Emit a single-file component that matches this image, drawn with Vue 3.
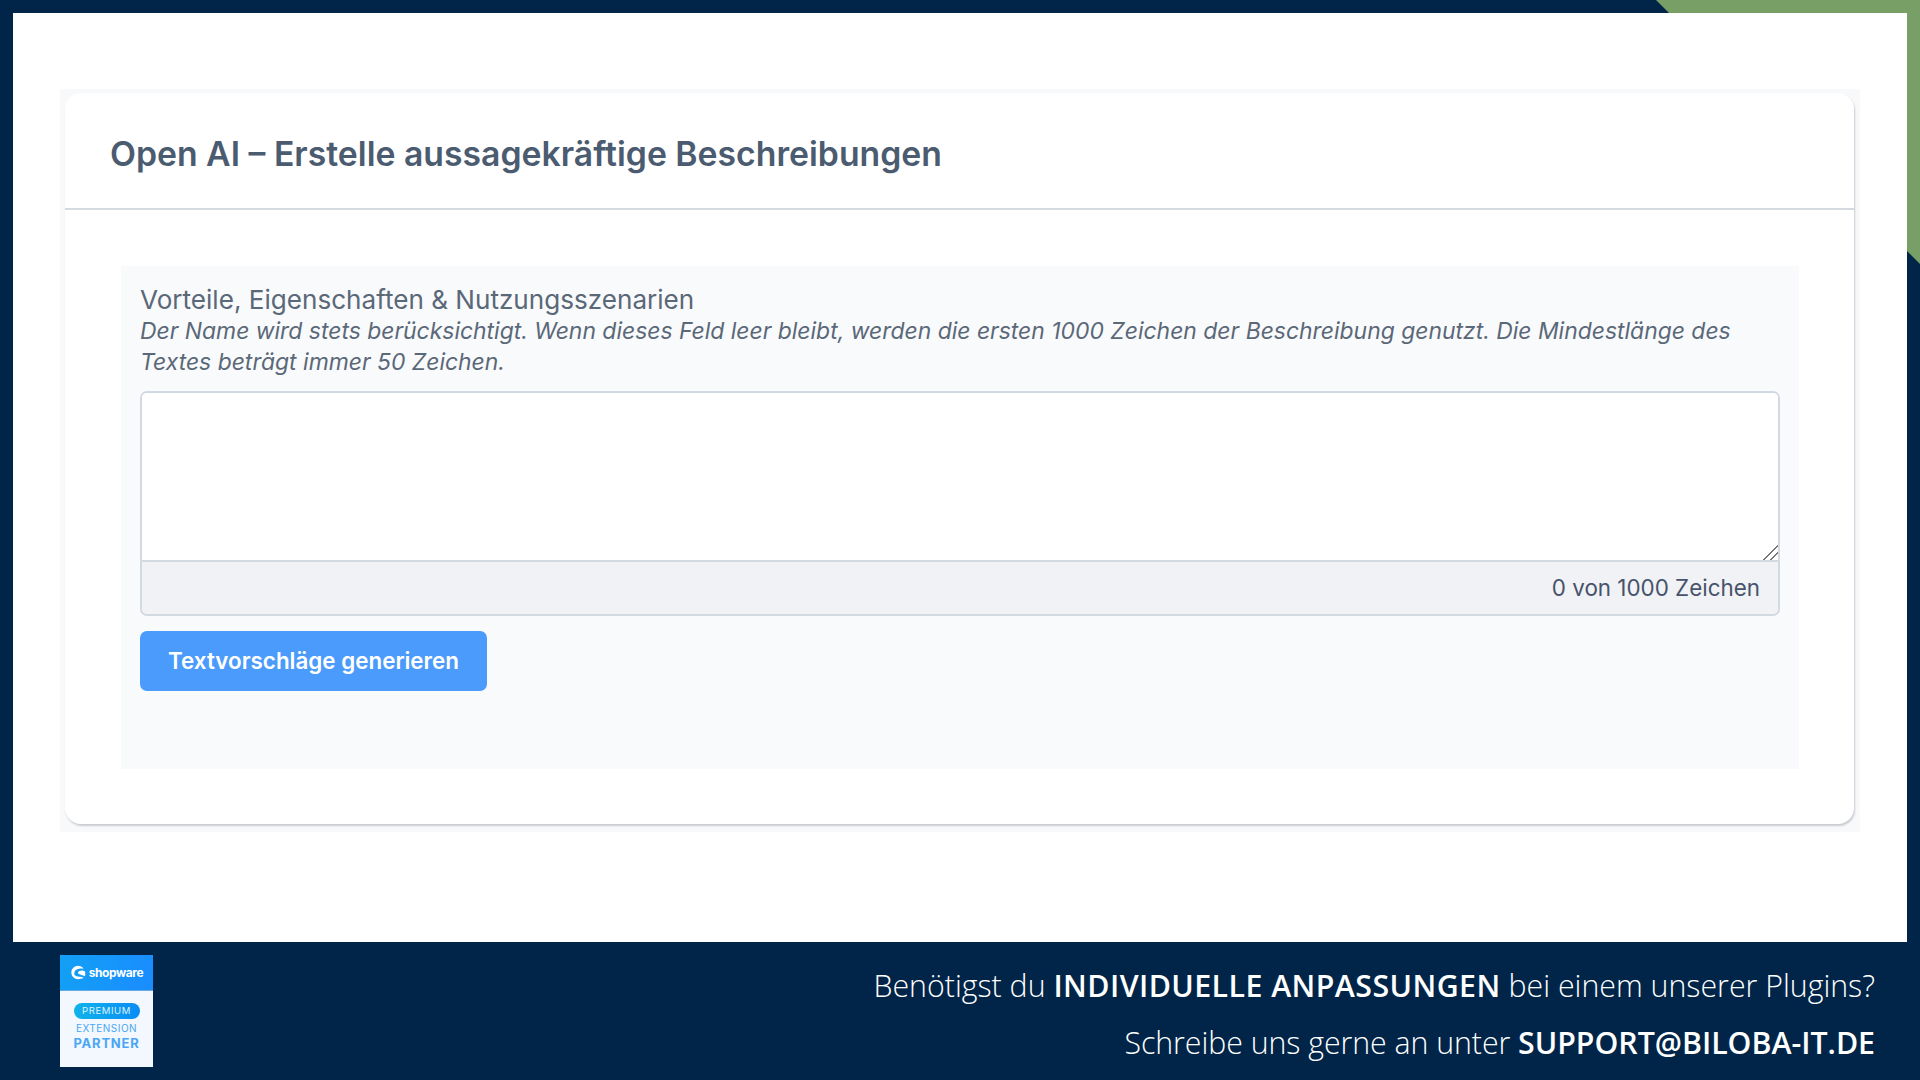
<template>
  <div class="slide">
    <div class="corner"></div>

    <main class="sheet">
      <div class="frame">
        <section class="card">
          <header class="card-header">
            <h1>Open AI – Erstelle aussagekräftige Beschreibungen</h1>
          </header>
          <div class="card-body">
            <div class="form-box">
              <label class="field-label" for="usp">Vorteile, Eigenschaften &amp; Nutzungsszenarien</label>
              <p class="field-help">
                Der Name wird stets berücksichtigt. Wenn dieses Feld leer bleibt, werden die ersten 1000 Zeichen der
                Beschreibung genutzt. Die Mindestlänge des Textes beträgt immer 50 Zeichen.
              </p>
              <div class="input-group">
                <textarea id="usp" class="input"></textarea>
                <div class="counter">0 von 1000 Zeichen</div>
              </div>
              <button class="generate" type="button">Textvorschläge generieren</button>
            </div>
          </div>
        </section>
      </div>
    </main>

    <footer class="footer">
      <div class="badge">
        <div class="badge-top">
          <svg class="sw-mark" viewBox="0 0 20 20" aria-hidden="true">
            <path d="M15.8 16.2C13.6 14.9 9.6 15.4 7 14.2 4.8 13.2 4.4 10.4 5.7 8.4 7.3 6 11.4 4.7 15.6 5.6 15.9 5.6 16 5.2 15.7 5 14.2 3.3 12 2.2 9.7 2.2 5.1 2.2 1.6 5.7 1.6 10.1c0 4.4 3.6 7.9 8 7.9 2.2 0 4.3-.7 6.2-1.4.2-.1.2-.3 0-.4Z" />
            <path d="M17.8 8.8c-.1-.1-2.7-1.1-4.900-1-1.900 0-3.400 1-3.400 2.400 0 1.200 1.300 1.800 3.200 2.300 1.800.5 3.600 1 5 1.900.2-.8.4-2.700.1-5.600Z" />
          </svg>
          <span class="sw-name">shopware</span>
        </div>
        <div class="badge-bottom">
          <span class="pill">PREMIUM</span>
          <span class="ext">EXTENSION</span>
          <span class="partner">PARTNER</span>
        </div>
      </div>

      <div class="contact">
        <p>Benötigst du <strong>INDIVIDUELLE ANPASSUNGEN</strong> bei einem unserer Plugins?</p>
        <p>Schreibe uns gerne an unter <strong>SUPPORT@BILOBA-IT.DE</strong></p>
      </div>
    </footer>
  </div>
</template>

<script setup>
</script>

<style>
html,
body {
  margin: 0;
  background: #002548;
}
</style>

<style scoped>
* {
  box-sizing: border-box;
}

.slide {
  position: relative;
  width: 1920px;
  height: 1080px;
  overflow: hidden;
  display: flex;
  flex-direction: column;
  padding: 13px 13px 0;
  background: #002548;
  font-family: Inter, "Liberation Sans", sans-serif;
}

/* green triangle top right, sits behind the white sheet */
.corner {
  position: absolute;
  top: 0;
  right: 0;
  width: 264px;
  height: 264px;
  background: #789f65;
  clip-path: polygon(0 0, 100% 0, 100% 100%);
}

.sheet {
  position: relative;
  height: 929px;
  flex: none;
  padding: 76px 47px 0;
  background: #fff;
}

.frame {
  height: 743px;
  padding: 4px 6px 8px 5px;
  background: #f8f9fb;
}

.card {
  height: 100%;
  background: #fff;
  border-radius: 16px;
  box-shadow: 1px 2px 2px rgba(90, 100, 115, 0.3);
}

.card-header {
  height: 117px;
  padding: 6px 45px 0;
  display: flex;
  align-items: center;
  border-bottom: 2px solid #d5dae1;
}

.card-header h1 {
  margin: 0;
  font-size: 33.75px;
  font-weight: 600;
  color: #4b5b70;
}

.card-body {
  padding: 56px 55px 0 56px;
}

.form-box {
  height: 503px;
  padding: 19px 19px 0;
  background: #f9fafc;
}

.field-label {
  display: block;
  margin-bottom: 1px;
  font-size: 26.1px;
  line-height: 30px;
  color: #5a6878;
}

.field-help {
  margin: 0 0 13px;
  font-size: 22.92px;
  line-height: 31px;
  font-style: italic;
  color: #5a6878;
}

.input-group {
  border: 2px solid #d3d9e1;
  border-radius: 7px;
  overflow: hidden;
}

.input {
  display: block;
  width: 100%;
  height: 167px;
  margin: 0;
  padding: 10px;
  border: 0;
  outline: 0;
  background: #fff;
  resize: vertical;
}

.input::-webkit-resizer {
  background: linear-gradient(
    135deg,
    transparent 49%,
    #777 49%,
    #777 54%,
    transparent 54%,
    transparent 72%,
    #777 72%,
    #777 77%,
    transparent 77%
  );
}

.counter {
  height: 54px;
  padding: 0 18px 2px;
  display: flex;
  align-items: center;
  justify-content: flex-end;
  border-top: 2px solid #d3d9e1;
  background: #f0f2f5;
  font-size: 22.4px;
  color: #47536a;
}

.generate {
  display: block;
  width: 347px;
  height: 60px;
  margin-top: 15px;
  padding: 0 0 2px;
  border: 0;
  border-radius: 7px;
  background: #4a9bfb;
  color: #fff;
  font-family: inherit;
  font-size: 22.4px;
  font-weight: 600;
}

.footer {
  flex: 1;
  display: flex;
  justify-content: space-between;
  padding: 13px 32px 0 47px;
  color: #fff;
}

.badge {
  width: 93px;
  height: 112px;
  display: flex;
  flex-direction: column;
  background: #f2f8fe;
}

.badge-top {
  height: 36px;
  display: flex;
  align-items: center;
  justify-content: center;
  gap: 2px;
  background: linear-gradient(100deg, #12a0f5, #1a8cff);
  border-bottom: 1px solid #6aa9df;
}

.sw-mark {
  width: 17px;
  height: 17px;
  fill: #fff;
}

.sw-name {
  font-size: 12px;
  font-weight: 700;
  letter-spacing: -0.4px;
  color: #fff;
}

.badge-bottom {
  flex: 1;
  display: flex;
  flex-direction: column;
  align-items: center;
  padding-top: 12px;
  color: #4ba6f5;
}

.pill {
  width: 66px;
  height: 16px;
  border-radius: 8px;
  background: linear-gradient(90deg, #10b3ea, #0a8cf5);
  color: #dff3ff;
  font-size: 9.5px;
  line-height: 16px;
  letter-spacing: 0.6px;
  text-align: center;
}

.ext {
  margin-top: 4px;
  font-size: 10px;
  line-height: 11px;
  letter-spacing: 0.5px;
}

.partner {
  margin-top: 1px;
  font-size: 13px;
  line-height: 16px;
  font-weight: 700;
  letter-spacing: 0.8px;
}

.contact {
  padding-top: 2px;
  text-align: right;
  font-family: "Open Sans", "Noto Sans", sans-serif;
  font-size: 30.3px;
  line-height: 57px;
  font-weight: 300;
}

.contact p {
  margin: 0;
}

.contact strong {
  font-weight: 600;
  letter-spacing: 0.45px;
}

.contact p:last-child {
  letter-spacing: -0.05px;
}

.contact p:last-child strong {
  letter-spacing: 0;
}
</style>
